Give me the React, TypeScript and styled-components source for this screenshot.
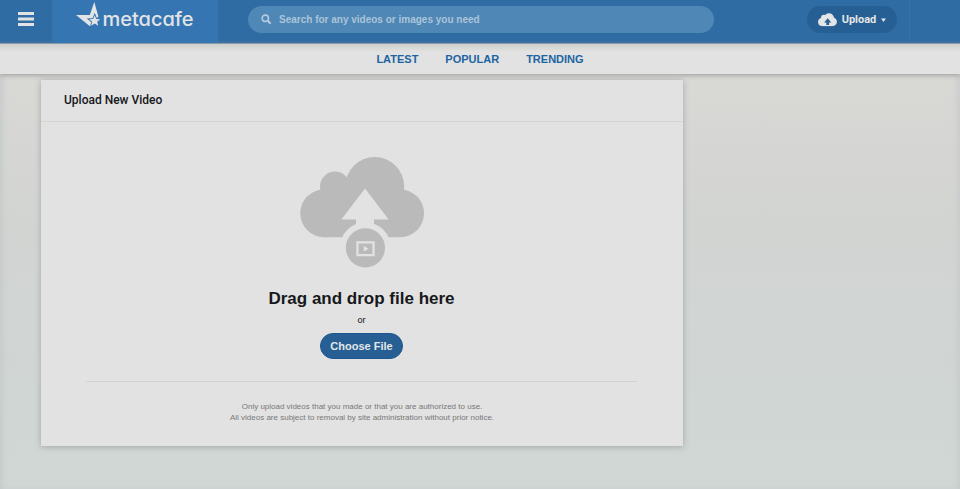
import React from "react";
import styled, { createGlobalStyle } from "styled-components";

const sans = '"Liberation Sans", Arial, sans-serif';

const GlobalStyle = createGlobalStyle`
  * { box-sizing: border-box; }
  body {
    margin: 0;
    min-height: 100vh;
    font-family: ${sans};
    color: #16181c;
    background: linear-gradient(#dad8d5 0, #d8d8d5 90px, #d2d4d2 230px, #d0d6d4 400px, #d0d7d5 100%);
  }
`;

const Page = styled.div`
  min-height: 100vh;
  box-shadow: inset 5px 0 6px -3px #c3c9c9, inset -5px 0 6px -3px #c6caca;
`;

const Header = styled.header`
  display: flex;
  align-items: center;
  height: 44px;
  padding-bottom: 4px;
  background: #2e6ca3;
  border-bottom: 1px solid #7f9bb1;
`;

const MenuButton = styled.button`
  align-self: stretch;
  display: grid;
  place-items: center;
  width: 52px;
  margin-bottom: -4px;
  padding: 0 0 5px;
  border: 0;
  background: none;
  color: #e2e2e2;
`;

const Logo = styled.a`
  align-self: stretch;
  display: flex;
  justify-content: center;
  width: 166px;
  margin-bottom: -4px;
  padding-bottom: 7px;
  background: #3575b2;
  color: #e2e4e6;
  text-decoration: none;
`;

const Wordmark = styled.span`
  font: 500 20px/38px Inter, sans-serif;
  font-feature-settings: "cv11";
`;

const Search = styled.label`
  flex: 1;
  display: flex;
  align-items: center;
  gap: 7px;
  height: 27px;
  margin: 0 93px 0 30px;
  padding: 0 13px;
  border-radius: 14px;
  background: #4f87b7;
  color: #b7cbdc;
`;

const SearchInput = styled.input`
  flex: 1;
  min-width: 0;
  padding: 0;
  border: 0;
  outline: 0;
  background: none;
  color: inherit;
  font: bold 10px/16px ${sans};
  &::placeholder { color: #abc4d8; opacity: 1; }
`;

const UploadButton = styled.button`
  display: flex;
  align-items: center;
  justify-content: center;
  gap: 5px;
  width: 90px;
  height: 27px;
  padding: 0;
  border: 0;
  border-radius: 14px;
  background: #265f93;
  color: #e4e5e6;
  font: bold 11px/16px Roboto, sans-serif;
`;

const Account = styled.div`
  align-self: stretch;
  width: 51px;
  margin: 0 0 -4px 12px;
  border-left: 1px solid #3772a8;
`;

const Nav = styled.nav`
  display: flex;
  justify-content: center;
  gap: 27px;
  height: 30px;
  background: linear-gradient(#cfcfcd, #e2e2e2 8px);
  box-shadow: 0 1px 5px #999b9a;
`;

const NavLink = styled.a`
  color: #1c65a2;
  font: bold 11px/30px ${sans};
  text-decoration: none;
`;

const Card = styled.main`
  max-width: 642px;
  margin: 6px 41px 43px;
  background: #e2e2e2;
  box-shadow: 0 1px 6px #a0a7a6;
`;

const CardTitle = styled.h1`
  margin: 0;
  padding: 0 23px;
  border-bottom: 1px solid #d4d5d5;
  font: 500 12px/41px Roboto, sans-serif;
`;

const DropZone = styled.section`
  display: flex;
  flex-direction: column;
  align-items: center;
  margin: 0 46px 0 45px;
  padding: 34px 0 22px;
  border-bottom: 1px solid #d1d2d2;
`;

const DropTitle = styled.h2`
  margin: 19px 0 0;
  font: bold 17px/24px ${sans};
`;

const Or = styled.span`
  margin: 1px 0 5px;
  font: 9px/16px Roboto, sans-serif;
`;

const ChooseButton = styled.button`
  width: 83px;
  height: 26px;
  padding: 0;
  border: 1px solid #1b568e;
  border-radius: 13px;
  background: #275f94;
  color: #e4e6e8;
  font: bold 11px/16px ${sans};
`;

const Notice = styled.p`
  margin: 0;
  padding: 19px 0 23px;
  color: #777879;
  text-align: center;
  font: 8px/11px ${sans};
`;

const MenuIcon = () => (
  <svg width="16" height="14" viewBox="0 0 16 14" fill="currentColor" aria-hidden="true">
    <path d="M0 0h16v3H0zM0 5.5h16v3H0zM0 11h16v3H0z" />
  </svg>
);

const StarIcon = () => (
  <svg width="26" height="28" viewBox="0 0 26 28" aria-hidden="true">
    <path fill="currentColor" d="M18.3 2l4.1 14.5-3.9 4-4.3 5.9L0 15h13.8z" />
    <path fill="#e2e4e6" stroke="#3575b2" strokeWidth="1.8" paintOrder="stroke" d="M18.7 15.2l1.5 3.8 4.1.2-3.1 2.6 1 4-3.5-2.2-3.5 2.2 1-4-3.1-2.6 4.1-.2z" />
  </svg>
);

const SearchIcon = () => (
  <svg width="11" height="11" viewBox="0 0 11 11" fill="none" stroke="currentColor" aria-hidden="true">
    <circle cx="4.3" cy="4.3" r="3.2" strokeWidth="1.6" />
    <path d="M6.8 6.8L9.6 9.8" strokeWidth="2" />
  </svg>
);

const SmallCloud = () => (
  <svg width="19" height="14" viewBox="0 0 19 14" aria-hidden="true">
    <g fill="currentColor">
      <circle cx="4.2" cy="9" r="4.1" />
      <circle cx="6" cy="4.8" r="3" />
      <circle cx="11" cy="5.3" r="5" />
      <circle cx="14.6" cy="8.8" r="4.3" />
      <path d="M4 7h11v6.1H4z" />
    </g>
    <path fill="#265f93" d="M9.7 5.2l3.6 4.3h-2.2V12H8.3V9.5h-2.2z" />
  </svg>
);

const Caret = () => (
  <svg width="5" height="4" viewBox="0 0 5 4" fill="currentColor" aria-hidden="true">
    <path d="M0 .5h5L2.5 4z" />
  </svg>
);

const UploadCloud = () => (
  <svg width="124" height="112" viewBox="0 0 124 112" aria-hidden="true">
    <g fill="#bababa">
      <circle cx="24.3" cy="57.3" r="24" />
      <circle cx="35" cy="30.5" r="15" />
      <circle cx="74.7" cy="30.5" r="29.5" />
      <circle cx="100" cy="57.3" r="24" />
      <path d="M24 34h76v47.3H24z" />
    </g>
    <g fill="#e2e2e2">
      <circle cx="65.4" cy="91.8" r="25.5" />
      <path d="M65 32.5L88.7 63.5H74V72H56V63.5H41.3z" />
    </g>
    <circle cx="65.4" cy="91.8" r="19.6" fill="#bababa" />
    <path fill="#e2e2e2" fillRule="evenodd" d="M56.3 85.3h18.4v15H56.3zM58.6 87.6v10.4h13.8V87.6z" />
    <path fill="#e2e2e2" d="M63.7 90l5 2.8-5 2.8z" />
  </svg>
);

export default function App() {
  return (
    <Page>
      <GlobalStyle />
      <Header>
        <MenuButton aria-label="Menu"><MenuIcon /></MenuButton>
        <Logo href="#home">
          <StarIcon />
          <Wordmark>metacafe</Wordmark>
        </Logo>
        <Search>
          <SearchIcon />
          <SearchInput type="search" aria-label="Search" placeholder="Search for any videos or images you need" />
        </Search>
        <UploadButton><SmallCloud />Upload<Caret /></UploadButton>
        <Account />
      </Header>
      <Nav>
        <NavLink href="#latest">LATEST</NavLink>
        <NavLink href="#popular">POPULAR</NavLink>
        <NavLink href="#trending">TRENDING</NavLink>
      </Nav>
      <Card>
        <CardTitle>Upload New Video</CardTitle>
        <DropZone>
          <UploadCloud />
          <DropTitle>Drag and drop file here</DropTitle>
          <Or>or</Or>
          <ChooseButton>Choose File</ChooseButton>
        </DropZone>
        <Notice>
          Only upload videos that you made or that you are authorized to use.<br />
          All videos are subject to removal by site administration without prior notice.
        </Notice>
      </Card>
    </Page>
  );
}
